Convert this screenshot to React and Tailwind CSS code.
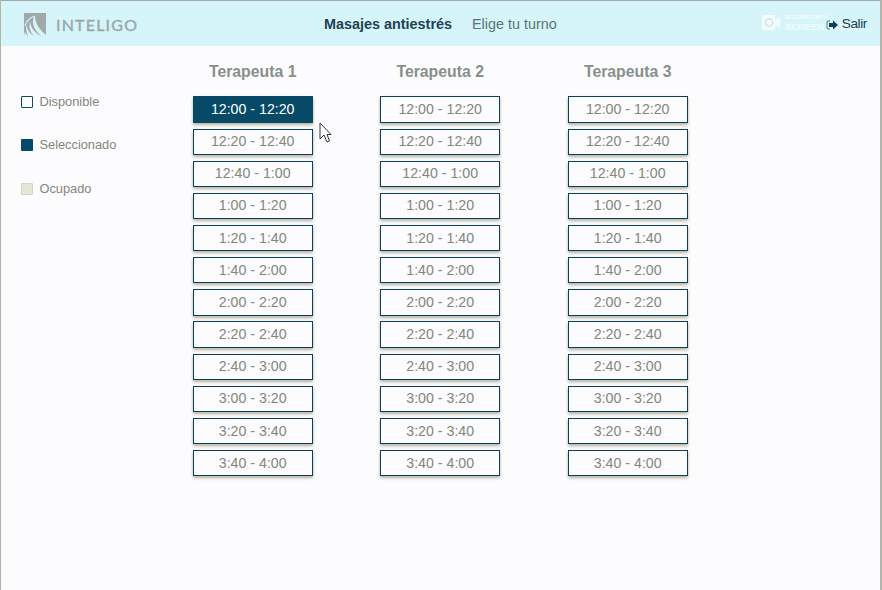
const slots = [
  '12:00 - 12:20', '12:20 - 12:40', '12:40 - 1:00', '1:00 - 1:20',
  '1:20 - 1:40', '1:40 - 2:00', '2:00 - 2:20', '2:20 - 2:40',
  '2:40 - 3:00', '3:00 - 3:20', '3:20 - 3:40', '3:40 - 4:00',
];

function Logo() {
  return (
    <div className="flex w-[301px] shrink-0 items-center gap-[9px]">
      <svg width="24" height="24" viewBox="0 0 24 24">
        <path d="M1 0H23V22C16 16 12 10 12 3C10 4 10 8 10 10C11 16 14 19 18 23C12 20 8 15 7 9C5 14 8 20 11 23C6 20 4 16 4 12C2 16 4 20 5 23C3 21 2 20 2 18L1 23Z" fill="#a0a8a8" />
        <path d="M12 3C6 5 3 9 2 13" fill="none" stroke="#d5f5fa" strokeWidth="1.2" />
      </svg>
      <svg width="82" height="18" viewBox="0 0 82 18">
        <text x="0" y="14.5" fontFamily="Lato, sans-serif" fontSize="16" fill="#9ba5a5" stroke="#9ba5a5" strokeWidth=".35" textLength="81">INTELIGO</text>
      </svg>
    </div>
  );
}

function Watermark() {
  return (
    <div className="absolute -left-[64px] -top-[1px] flex items-center gap-1 text-white/70">
      <svg className="shrink-0" width="19" height="16" viewBox="0 0 19 16">
        <path d="M2 0H12Q13 0 13 2V5L18 2V13L13 10V13Q13 15 11 15H2Q0 15 0 13V2Q0 0 2 0Z" fill="currentColor" />
        <circle cx="7" cy="7.5" r="3.7" fill="none" stroke="#cbdadd" strokeWidth="1.2" />
      </svg>
      <div className="flex flex-col font-bold">
        <span className="text-[5px] leading-[7px]">RECORDED WITH</span>
        <span className="text-[9.5px] leading-[11px]">SCREENCASTIFY</span>
      </div>
    </div>
  );
}

function Header() {
  return (
    <header className="flex h-[46px] shrink-0 items-center border-t border-[#9faaa8] bg-[#d5f5fa] pl-[22px] pr-[13px] pt-[2px]">
      <Logo />
      <h1 className="w-[148px] whitespace-nowrap text-[14.4px] font-bold text-[#1d4354]">Masajes antiestrés</h1>
      <span className="whitespace-nowrap text-[14.4px] text-[#5e7373]">Elige tu turno</span>
      <div className="relative ml-auto flex items-center gap-1 text-[13.6px] leading-5 text-[#123f55]">
        <Watermark />
        <svg className="relative" width="12" height="10" viewBox="0 0 12 10">
          <path d="M4 1H2Q1 1 1 2V8Q1 9 2 9H4" fill="none" stroke="currentColor" strokeOpacity=".7" />
          <path d="M3 3h4V0.5L12 5L7 9.5V7H3Z" fill="currentColor" />
        </svg>
        <span className="relative -mt-px tracking-[-0.4px]">Salir</span>
      </div>
    </header>
  );
}

function Legend() {
  return (
    <aside className="flex w-[171.7px] flex-col gap-[23.5px] pt-[45.5px] text-[12.8px] text-[#83867a]">
      <div className="flex h-5 items-center gap-[6.5px]"><i className="size-3 rounded-[1px] border border-[#104a5d]" />Disponible</div>
      <div className="flex h-5 items-center gap-[6.5px]"><i className="size-3 rounded-[1px] bg-[#064a67]" />Seleccionado</div>
      <div className="flex h-5 items-center gap-[6.5px]"><i className="size-3 rounded-[1px] border border-[#d4d4c4] bg-[#e6e6d6]" />Ocupado</div>
    </aside>
  );
}

function Therapist({ number }) {
  return (
    <section className="w-[120px]">
      <h2 className="h-[50.4px] pt-[15px] text-center text-[15.8px] leading-[22px] font-bold text-[#87908b]">Terapeuta {number}</h2>
      <div className="flex flex-col gap-[5.98px]">
        {slots.map((slot, i) => (
          <button key={slot} className={number === 1 && i === 0
            ? 'h-[26.2px] border border-[#064a67] bg-[#064a67] pb-px text-[14.2px] leading-4 text-white shadow-[0_2px_3px_#b4b2a0]'
            : 'h-[26.2px] border border-[#0c405a] bg-[#fcfcfe] pb-px text-[14.2px] leading-4 text-[#83867a] shadow-[0_2px_3px_#b4b2a0]'}>{slot}</button>
        ))}
      </div>
    </section>
  );
}

export default function App() {
  return (
    <div className="relative flex h-[590px] w-[882px] flex-col overflow-hidden border-l border-r-2 border-[#b1b5aa] bg-[#fcfcfe] font-['Liberation_Sans',Arial,sans-serif]">
      <Header />
      <main className="flex pl-[20px]">
        <Legend />
        <div className="flex gap-[67.5px]">
          <Therapist number={1} /><Therapist number={2} /><Therapist number={3} />
        </div>
      </main>
      <svg className="absolute left-[318px] top-[122px]" width="13" height="21" viewBox="0 0 13 21">
        <path d="M1 1V17L5 13L8 20L10.5 19L8 12.5H12Z" fill="white" stroke="#30343c" />
      </svg>
    </div>
  );
}
